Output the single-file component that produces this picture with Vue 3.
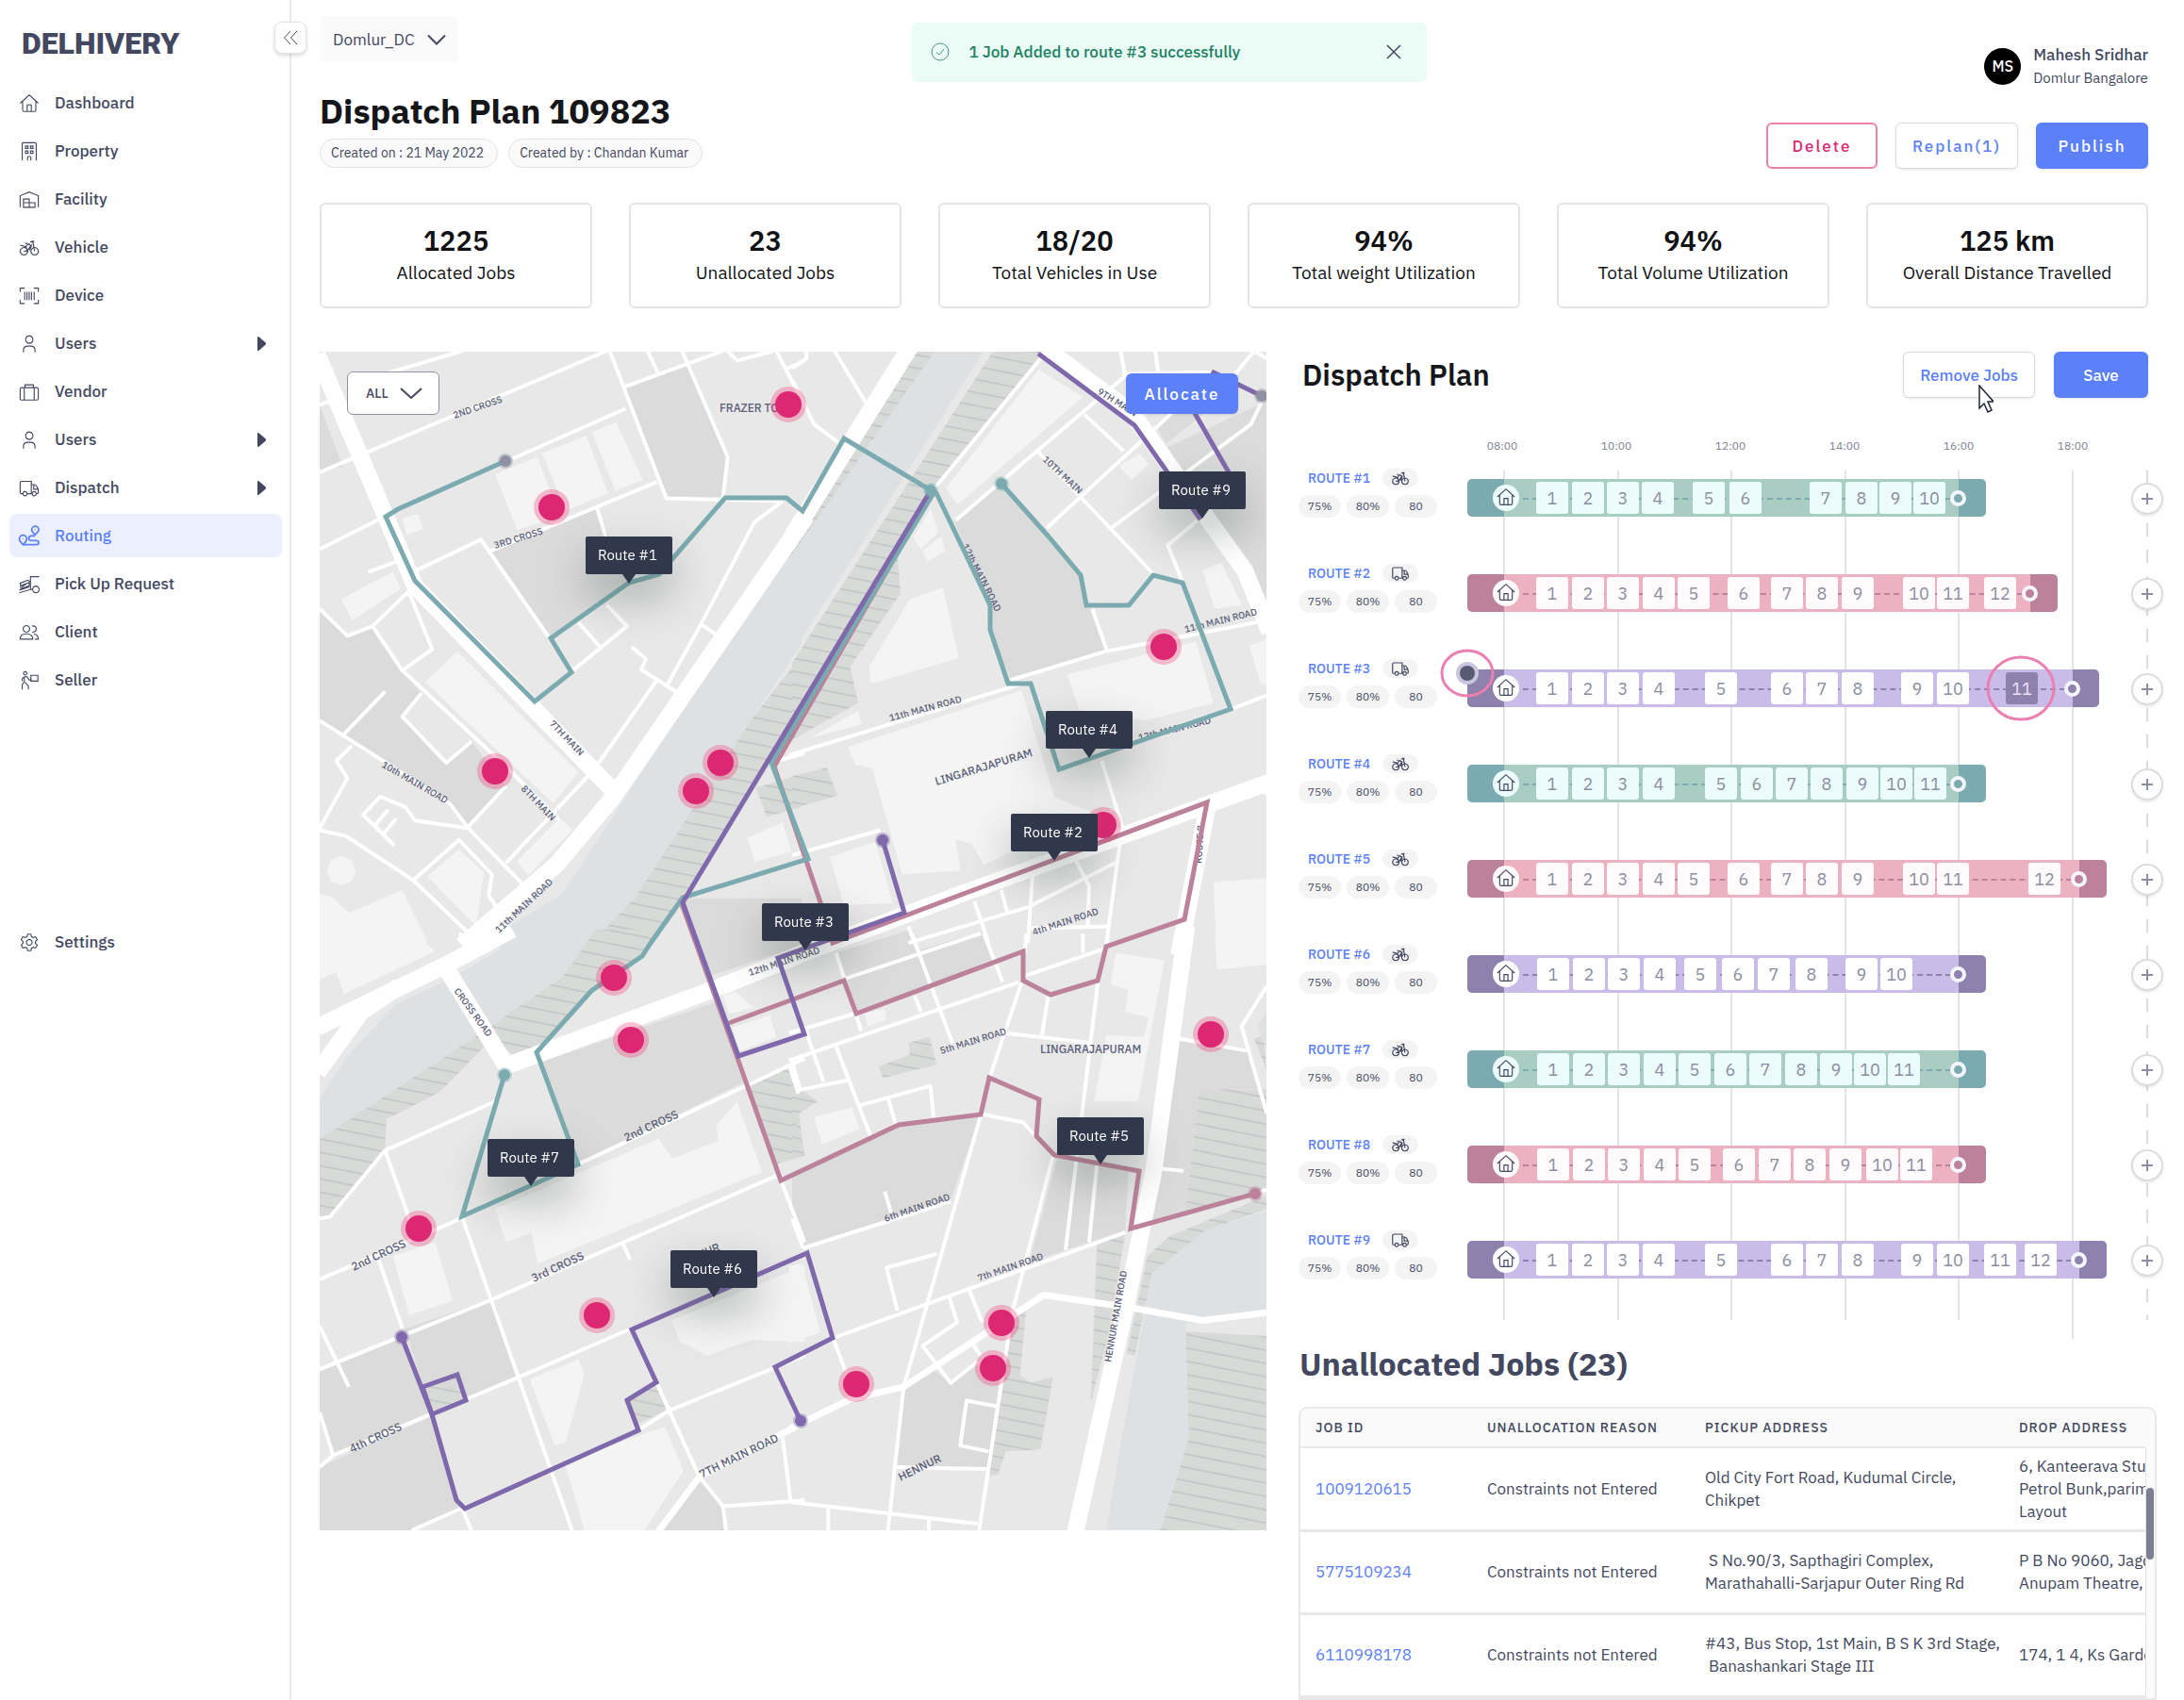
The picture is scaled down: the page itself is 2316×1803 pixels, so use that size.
<script setup>
import { ref } from 'vue'

const hub = ref('Domlur_DC')
const filter = ref('ALL')
const showToast = ref(true)

const menu = [
  { name: 'Dashboard', icon: 'home' },
  { name: 'Property', icon: 'building' },
  { name: 'Facility', icon: 'warehouse' },
  { name: 'Vehicle', icon: 'bike' },
  { name: 'Device', icon: 'barcode' },
  { name: 'Users', icon: 'user', more: true },
  { name: 'Vendor', icon: 'case' },
  { name: 'Users', icon: 'user', more: true },
  { name: 'Dispatch', icon: 'truck', more: true },
  { name: 'Routing', icon: 'route', active: true },
  { name: 'Pick Up Request', icon: 'pickup' },
  { name: 'Client', icon: 'users' },
  { name: 'Seller', icon: 'seller' },
  { name: 'Settings', icon: 'gear', last: true },
]

// stroke paths on a 24x24 grid
const icons = {
  home: 'M1 12 12 2l11 10M4 10v10q0 2 2 2h12q2 0 2-2V10M9.500 22v-8h5v8',
  building: 'M3.500 23V3q0-1.500 1.500-1.500h14q1.500 0 1.500 1.500v20M7.500 5.500h3v3h-3zM13.500 5.500h3v3h-3zM7.500 11.500h3v3h-3zM13.500 11.500h3v3h-3zM10 23v-3q0-2 2-2t2 2v3',
  warehouse: 'M1 21.500V7.500L12 3l11 4.500v14M5 21.500V11.500h7v10zM12 16h7v5.500h-7M5 16h7',
  bike: 'M5.500 12a4.500 4.500 0 1 0 .1 0zM18.500 12a4.500 4.500 0 1 0 .1 0zM5.500 16.500h4l5.500-8M9.500 16.500 8 10.500l3.500-3 3 3-2 5M1 9.500q4.500-.5 8 4M15 4.500h3M13 5l3.500.5L18.500 16.500M10 7H7',
  barcode: 'M1 7.500V3h5.500M17.500 3H23v4.500M23 17v4.500h-5.500M6.500 21.500H1V17M6.500 7.500v10M9.300 7.500v10M12 7.500v10M14.700 7.500v10M18 7.500v10',
  user: 'M12 2.500a4.500 4.500 0 1 0 .1 0zM5 22.500v-2.500q0-5 5-5h4q5 0 5 5v2.500',
  case: 'M3 7h18q2 0 2 2v11q0 2-2 2H3q-2 0-2-2V9q0-2 2-2zM6 7v15M18 7v15M7 7V3.500h10V7',
  truck: 'M4 19H2.500Q1 19 1 17.500V5.500Q1 4 2.500 4h12v15H9.500M14.500 8H18q2 0 3 2l1.500 3q.5 1 .5 2v2.500q0 1.500-2 1.500M22.500 13.500H17.500V8M6.800 16.500a2.500 2.500 0 1 0 .1 0zM18 16.500a2.500 2.500 0 1 0 .1 0zM14.500 19h1',
  route: 'M4.500 22.500q-4.500-4.500-4.500-7a4.500 4.500 0 0 1 9 0q0 2.500-4.500 7zM4.500 15v.8M19 10.500q-4-4-4-6a4 4 0 0 1 8.500 0q0 2-4.500 6zM19.200 4v.8M4.500 22.500h16q3 0 3-2.500t-3-2.500H14.500q-3 0-3-2.800t3-2.800h4.500',
  pickup: 'M0 22.500 13.500 18.500V3h10.500M13.500 18.500h3M20 14.500a4 4 0 1 0 .1 0zM1 11l8.500-3.500q2-.5 2.500 1L12 14l-10 3.500zM1.500 14l10.500-4M0 19.500l12-4M3 15.500l7-5',
  users: 'M8.500 4a4 4 0 1 0 .1 0zM1 20.500Q1 14 8.500 14t8 6.500zM15.500 4.500q5-.5 5 3.500t-5 4M17.500 14Q23 15 23 20.500h-4',
  seller: 'M7 1.500a2 2 0 1 0 .1 0zM3.500 23v-6l2.500-3V8q4-1.500 4.500 1.500L12 11.500h3M3.500 13v-3L6 8M11 23v-4l-4-4.500M14 6h8.500v7H14z',
  gear: 'M12 8.500a3.500 3.500 0 1 0 .1 0zM10 2h4l.7 3 2 1.100 3-.9 2 3.500-2.200 2.300v2l2.200 2.300-2 3.500-3-.9-2 1.100-.7 3h-4l-.7-3-2-1.100-3 .9-2-3.500 2.200-2.300v-2L2.300 8.700l2-3.500 3 .9 2-1.100z',
}

const stats = [
  { value: '1225', label: 'Allocated Jobs' },
  { value: '23', label: 'Unallocated Jobs' },
  { value: '18/20', label: 'Total Vehicles in Use' },
  { value: '94%', label: 'Total weight Utilization' },
  { value: '94%', label: 'Total Volume Utilization' },
  { value: '125 km', label: 'Overall Distance Travelled' },
]

// the city map comes in four tiles, each drawn in its own units
const tiles = [
  {
    transform: 'matrix(.3333 0 0 .4082 -9 -13)',
    dark: ['27,170 100,330 27,345', '995,130 1195,65 1325,305 1310,410 1130,410', '570,550 910,440 1010,633 760,776', '27,700 115,770 195,745 290,860 350,920 290,980 430,1100 510,1045 620,1160 495,1265 440,1210 27,990'],
    light: ['585,350 720,305 790,460 655,495', '735,295 875,250 945,400 810,445', '893,240 970,215 1055,365 968,393', '290,465 340,452 357,493 303,508', '95,675 260,603 285,648 130,730', '465,810 850,1125 770,1205 362,890', '370,1395 470,1325 550,1385 525,1525', '655,1355 790,1243 832,1273 690,1393', '27,1440 70,1450 120,1490 290,1430 370,1568 27,1568', '50,1380 64,1352 95,1341 128,1352 142,1380 128,1408 95,1419 64,1408', '1388,1295 1500,1255 1528,1330 1412,1358'],
    river: ['1560,490 1560,790 1030,1450 880,1580 520,1580 800,1440 1000,1190'],
    park: ['1570,810 1570,960 1183,1463 1080,1580 880,1580 1130,1270', '1415,1165 1560,1130 1560,1215 1450,1240'],
    roads: ['27,345 940,30', '150,110 480,30', '950,30 1130,413 1500,420', '990,125 1310,30', '1070,30 1105,90', '1180,30 1325,305 1310,413', '1325,30 1355,55 1470,30', '1480,30 1540,125 1570,170', '1515,75 1560,60', '180,605 270,578', '27,545 215,468', '27,170 60,160', '640,310 1000,180', '335,600 540,520 830,860', '570,550 1100,370', '910,440 940,520', '940,690 1005,745 711,941', '850,735 920,800', '1500,420 1410,475 1240,740 1135,895', '1240,740 1295,770', '1020,800 1065,830 1050,858 1170,920', '1100,885 915,1100', '27,700 115,770 195,745 290,860 620,1110 790,1250', '195,745 310,655 385,805 290,860', '350,920 290,980 430,1100 510,1045', '105,1025 235,915', '27,990 440,1205 500,1270 690,1430', '130,1055 80,1095 115,1140 27,1270', '500,1270 330,1250 300,1215 220,1188 165,1235 265,1315', '200,1265 245,1222', '230,1285 270,1245', '495,1270 620,1160', '620,1360 880,1135', '27,1275 110,1290 325,1405 510,1550', '325,1405 470,1300 575,1390 565,1445 610,1500', '1463,1100 1570,1075'],
    mains: ['20,40 330,640 970,1180', '1575,460 960,1190 780,1365 480,1575'],
  },
  {
    transform: 'matrix(.3333 0 0 .4082 501 -13)',
    dark: ['515,470 667,375 812,510 918,612 935,692 955,700 1000,810 695,885 631,755 630,690', '1195,280 1510,160 1510,720 1430,580 1300,430', '1155,220 1290,150 1360,160 1190,270'],
    light: ['785,78 925,150 525,430 490,385', '245,850 375,675 480,645 530,828 250,895', '385,515 440,440 465,500 410,545', '415,550 475,510 487,550 430,577', '60,1035 210,965 220,1000', '178,1058 730,912 835,1190 960,1230 610,1365 570,1310 520,1300 535,1380 350,1390 255,1115 200,1105', '875,870 1285,785 1340,945 1125,990 915,965', '1040,330 1105,295 1135,325 1080,365', '1305,600 1365,580 1432,690 1345,700', '120,1345 265,1305 320,1465 165,1470', '1340,1410 1510,1400 1510,1568 1350,1568', '1455,795 1510,780 1510,900 1490,895'],
    river: ['455,30 610,30 -10,830 -10,570'],
    park: ['390,30 460,30 -10,575 -10,520', '640,30 800,30 450,400 335,560 345,660 185,850 210,945 0,1040 0,840', '0,1135 110,1112 145,1185 0,1220'],
    roads: ['800,40 440,400', '135,30 235,165', '0,105 70,220 150,270', '0,75 45,50 45,30', '520,470 1060,95 1045,30', '1155,30 1165,85', '1050,90 1340,85', '1400,100 1470,30 1510,50', '810,490 1290,130', '780,290 1150,610', '1015,490 1460,220 1495,160', '930,195 1055,290', '1290,470 1195,535 1240,625', '695,885 1000,810 1510,730', '955,700 1000,805', '-10,1080 730,895', '1395,961 1510,925', '985,1095 1050,1265 1000,1568', '0,1340 280,1275', '580,1460 625,1568', '665,1430 685,1490', '370,1525 390,1568', '765,1390 750,1568', '900,1350 945,1420 940,1530', '1040,1355 750,1475 370,1568', '750,1530 1005,1525', '1490,1165 1510,1180'],
    mains: ['375,20 0,510', '800,20 1080,190 1220,350 1440,600 1520,760', '0,1605 540,1440 1520,1150', '1325,1200 1230,1600'],
  },
  {
    transform: 'matrix(.3333 0 0 .4146 -9 617)',
    dark: ['730,330 1290,175 1375,380 850,590', '300,1010 580,935 660,1135 492,1195 465,1130 355,1160', '27,1120 287,1033 385,1230 70,1335 27,1225', '27,1365 385,1235 461,1450 490,1472 320,1527 27,1527', '1235,1395 1310,1465 1320,1527 1110,1527', '1180,-90 1560,-90 1560,30 1265,110'],
    light: ['27,0 330,0 395,45 105,155 80,100 27,118', '585,705 1105,525 1150,575 1295,530 1290,490 1355,430 1435,610 720,845 700,765 620,790', '260,825 395,790 450,940 312,977', '695,1140 850,1090 870,1125 810,1300 775,1310', '805,1350 1125,1262 1185,1375 1060,1527 870,1527', '1145,990 1570,850 1570,1045 1400,1040 1260,1080 1175,1045', '1310,160 1350,150 1410,190 1330,205', '1340,240 1460,210 1480,265 1365,300'],
    river: ['27,420 130,300 270,180 430,120 560,60 700,-10 905,-10 800,110 530,260 27,525'],
    park: ['27,525 530,260 800,110 905,-10 1115,-10 1052,58 892,146 718,304 640,310 600,280 550,290 410,405 240,475 235,555 60,720 27,725', '1375,385 1520,340 1545,420 1570,570 1480,590', '355,1165 465,1130 492,1195 385,1230', '1006,1195 1098,1148 1130,1220 1040,1255'],
    roads: ['27,730 60,725 235,555 585,430', '235,555 330,770', '27,885 475,730', '480,725 830,1527', '215,835 290,1010', '27,1115 580,935 1480,620', '850,590 1570,320', '27,1005 120,1160', '27,1225 70,1335', '27,1365 70,1335 660,1135 1020,1010', '1040,1271 1140,1220 1570,1080', '1098,1148 1235,1390 1310,1465 1570,1450', '480,1470 510,1527', '320,1527 480,1470', '990,790 1015,835', '1310,1465 1320,1527', '1500,1290 1525,1450', '470,0 505,20', '1520,335 1550,410', '1495,632 1570,790'],
    streets: ['1100,1535 1235,1390 1570,1250'],
    mains: ['20,240 430,80 640,-10', '20,355 160,200 280,135', '430,90 625,345', '600,345 1290,140 1570,50'],
  },
  {
    transform: 'matrix(.3333 0 0 .4146 501 617)',
    dark: ['0,615 340,490 600,462 500,690 35,805 0,730', '845,570 1070,610 1060,760 755,840', '1225,275 1450,300 1510,430 1510,398 1295,398 1250,720 1140,740', '350,1165 440,1110 505,1150 580,1100 660,1140 620,1370 330,1365', '140,50 380,-10 435,140 205,200', '395,45 600,-5 640,65 445,130'],
    light: ['1030,50 1185,68 1100,430 960,430 1000,260 1120,265 1135,215 1060,200 1070,145 1013,130', '1345,0 1510,0 1510,80 1352,92', '230,205 295,193 300,220 240,238', '70,470 190,445 215,500 95,540', '-10,850 30,845 90,1020 -10,1050'],
    river: ['1510,710 1315,760 1145,870 1115,1000 1040,1330 1000,1527 1170,1527 1262,1290 1252,1000 1510,970', '1480,235 1510,205 1510,300'],
    park: ['970,790 1060,770 1000,1050 950,1200', '1130,825 1200,775 1510,670 1510,705 1315,760 1145,870 1090,1080 1065,1075', '1295,398 1510,400 1510,660 1250,720', '1252,1018 1510,1030 1510,1527 1170,1527 1262,1290', '690,1000 745,960 725,1130 760,1148 830,1135 790,1320 680,1325 655,1385 625,1385', '275,340 375,310 370,280 438,265 460,335 290,370', '0,380 80,430 5,470 40,560 0,575', '1470,270 1500,260 1510,350'],
    roads: ['355,1160 305,1527', '600,465 355,1160', '730,125 630,365', '-10,325 720,125', '735,110 990,40', '-10,255 200,205', '130,1035 1060,765', '35,805 505,685', '830,570 700,970 595,1527', '975,110 870,810', '970,590 945,790', '680,255 945,280', '815,160 795,260', '925,0 925,50', '1005,0 1000,30', '745,0 740,50', '40,240 100,380', '0,325 25,400 180,375', '140,290 250,520', '215,440 440,390 450,470', '305,420 330,490', '380,0 510,280', '610,0 670,125', '140,50 220,250', '390,160 410,200', '160,118 600,0', '295,660 315,715', '460,820 300,855 335,965', '500,930 525,995 415,1055 505,1150 590,1095', '560,905 605,995', '570,1045 600,1080', '655,1210 555,1195 535,1310 625,1325', '330,1365 620,1370', '0,1455 590,1510', '115,1470 115,1527', '435,1495 435,1527', '0,730 35,805', '130,1035 170,1120', '600,462 735,483 775,520', '1150,600 1245,607', '1225,268 1445,300', '1510,135 1430,238 1510,460', '1472,666 1510,655'],
    streets: ['-10,1268 190,1190 355,1160 640,1010 800,925 1060,955 1305,990 1510,970'],
    mains: ['1255,-20 1150,610 1060,960 900,1535'],
  },
]

const lines = [
  { color: '#7babb0', points: '197,116 83,167 70,175 101,243 228,371 267,340 245,304 328,245 360,236 430,155 495,155 512,169 556,92 648,147 654,150 711,269 711,295 730,352 754,352 784,443 966,379 915,245 884,237 858,269 813,269 807,237 772,195 723,140' },
  { color: '#bc829b', points: '649,150 482,440 533,590 544,627 941,478 917,602 834,631 825,667 775,682 746,667 746,636 569,702 556,667 434,712' },
  { color: '#bc829b', points: '384,586 443,749 489,879 614,820 701,809 710,770 763,793 760,832 779,852 869,869 860,930 992,893' },
  { color: '#7babb0', points: '651,150 479,436 518,538 385,579 351,627 342,641 288,678 230,743 274,862 151,917 196,767' },
  { color: '#8068ad', points: '597,518 620,595 486,643 514,724 444,747 385,584 648,147' },
  { color: '#8068ad', points: '87,1045 119,1127 145,1218 154,1227 338,1144 326,1112 357,1093 331,1037 517,956 544,1046 483,1077 510,1134' },
  { color: '#8068ad', points: '109,1098 146,1085 155,1112 119,1127 109,1098' },
  { color: '#8068ad', points: '762,2 864,78 934,178' },
  { color: '#8068ad', points: '964,128 925,60 948,22 999,47' },
]

const ends = [
  { x: 197, y: 116, color: '#8f90a3' },
  { x: 648, y: 147, color: '#7babb0' },
  { x: 723, y: 140, color: '#7babb0' },
  { x: 597, y: 518, color: '#8068ad' },
  { x: 196, y: 767, color: '#7babb0' },
  { x: 87, y: 1045, color: '#8068ad' },
  { x: 510, y: 1134, color: '#8068ad' },
  { x: 992, y: 893, color: '#bc829b' },
  { x: 999, y: 47, color: '#8f90a3' },
]

const pins = [
  [246, 165], [497, 56], [186, 445], [425, 436], [399, 466], [895, 313], [831, 502], [312, 664],
  [330, 730], [105, 930], [294, 1022], [945, 724], [569, 1095], [723, 1030], [714, 1078],
]

const tags = [
  { n: 1, x: 328, y: 246 },
  { n: 9, x: 936, y: 177 },
  { n: 4, x: 816, y: 431 },
  { n: 2, x: 779, y: 540 },
  { n: 3, x: 515, y: 635 },
  { n: 5, x: 828, y: 862 },
  { n: 7, x: 224, y: 885 },
  { n: 6, x: 418, y: 1003 },
]

const places = [
  { t: '2ND CROSS', x: 143, y: 71, r: -19 },
  { t: '3RD CROSS', x: 186, y: 209, r: -17 },
  { t: '7TH MAIN', x: 243, y: 395, r: 46 },
  { t: '8TH MAIN', x: 213, y: 464, r: 46 },
  { t: '10th MAIN ROAD', x: 65, y: 440, r: 30 },
  { t: '11th MAIN ROAD', x: 190, y: 617, r: -43 },
  { t: 'FRAZER TOWN', x: 424, y: 64, r: 0, big: true },
  { t: '9TH MAIN', x: 824, y: 44, r: 32 },
  { t: '10TH MAIN', x: 766, y: 115, r: 43 },
  { t: '12th MAIN ROAD', x: 681, y: 206, r: 63 },
  { t: '11th MAIN ROAD', x: 918, y: 298, r: -14 },
  { t: '11th MAIN ROAD', x: 605, y: 392, r: -15 },
  { t: '12th MAIN ROAD', x: 869, y: 413, r: -14 },
  { t: 'LINGARAJAPURAM', x: 654, y: 460, r: -17, big: true },
  { t: '4th MAIN ROAD', x: 757, y: 619, r: -18 },
  { t: 'ROUTE 7', x: 935, y: 543, r: -86 },
  { t: '12th MAIN ROAD', x: 456, y: 662, r: -18 },
  { t: 'CROSS ROAD', x: 142, y: 678, r: 54 },
  { t: '2nd CROSS', x: 325, y: 838, r: -25, big: true },
  { t: '2nd CROSS', x: 36, y: 975, r: -25, big: true },
  { t: '3rd CROSS', x: 227, y: 987, r: -25, big: true },
  { t: '4th CROSS', x: 34, y: 1168, r: -25, big: true },
  { t: '7TH MAIN ROAD', x: 405, y: 1195, r: -26, big: true },
  { t: 'HENNUR', x: 616, y: 1198, r: -26, big: true },
  { t: 'HENNUR', x: 380, y: 971, r: -22, big: true },
  { t: '5th MAIN ROAD', x: 659, y: 745, r: -17 },
  { t: 'LINGARAJAPURAM', x: 764, y: 744, r: 0, big: true },
  { t: '6th MAIN ROAD', x: 600, y: 923, r: -19 },
  { t: '7th MAIN ROAD', x: 699, y: 986, r: -19 },
  { t: 'HENNUR MAIN ROAD', x: 839, y: 1072, r: -80 },
]

const hours = ['08:00', '10:00', '12:00', '14:00', '16:00', '18:00']

const routes = [
  { n: 1, tone: 'teal', icon: 'bike', end: 521, size: 550, stops: [73, 111, 148, 185, 239, 278, 363, 401, 437, 473] },
  { n: 2, tone: 'pink', icon: 'truck', end: 597, size: 626, stops: [73, 111, 148, 186, 223, 276, 322, 359, 397, 462, 498, 548] },
  { n: 3, tone: 'purple', icon: 'truck', end: 642, size: 670, picked: 11, stops: [73, 111, 148, 186, 252, 322, 359, 397, 460, 498, 571] },
  { n: 4, tone: 'teal', icon: 'bike', end: 521, size: 550, stops: [73, 111, 148, 186, 252, 290, 327, 364, 402, 438, 474] },
  { n: 5, tone: 'pink', icon: 'bike', end: 649, size: 678, stops: [73, 111, 148, 186, 223, 276, 322, 359, 397, 462, 498, 595] },
  { n: 6, tone: 'purple', icon: 'bike', end: 521, size: 550, stops: [74, 112, 149, 187, 230, 270, 308, 348, 401, 438] },
  { n: 7, tone: 'teal', icon: 'bike', end: 521, size: 550, stops: [74, 112, 149, 187, 224, 262, 299, 337, 374, 410, 446] },
  { n: 8, tone: 'pink', icon: 'bike', end: 521, size: 550, stops: [74, 112, 149, 187, 224, 271, 309, 346, 384, 423, 459] },
  { n: 9, tone: 'purple', icon: 'truck', end: 649, size: 678, stops: [73, 111, 148, 186, 252, 322, 359, 397, 460, 498, 548, 591] },
]

// timeline units to a share of the track
const pct = (n) => (n / 722) * 100 + '%'

const jobs = [
  { id: '1009120615', pickup: ['Old City Fort Road, Kudumal Circle,', 'Chikpet'], drop: ['6, Kanteerava Studio,', 'Petrol Bunk,parimala', 'Layout'] },
  { id: '5775109234', pickup: ['\u00a0S No.90/3, Sapthagiri Complex,', 'Marathahalli-Sarjapur Outer Ring Rd'], drop: ['P B No 9060, Jagdish', 'Anupam Theatre,'] },
  { id: '6110998178', pickup: ['#43, Bus Stop, 1st Main, B S K 3rd Stage,', '\u00a0Banashankari Stage III'], drop: ['174, 1 4, Ks Garden'] },
]
</script>

<template>
  <div class="app">
    <aside class="sidebar">
      <div class="logo">DELHIVERY</div>
      <button class="collapse" aria-label="Collapse menu">
        <svg viewBox="0 0 16 16"><path d="M8 1 1.500 8 8 15M15 1 8.500 8 15 15" /></svg>
      </button>
      <nav>
        <a v-for="(item, i) in menu" :key="i" href="#" class="item" :class="{ active: item.active, last: item.last }">
          <svg class="icon" viewBox="0 0 24 24"><path :d="icons[item.icon]" /></svg>
          <span>{{ item.name }}</span>
          <svg v-if="item.more" class="arrow" viewBox="0 0 9 15"><path d="M0 1q0-1.500 1.500-.7l7 6q1 1.200 0 2.400l-7 6Q0 15.500 0 14z" /></svg>
        </a>
      </nav>
    </aside>

    <main>
      <header class="topbar">
        <label class="hub">
          <select v-model="hub" aria-label="Hub">
            <option>Domlur_DC</option>
          </select>
          <svg viewBox="0 0 20 12"><path d="M1 1.500 10 10.500 19 1.500" /></svg>
        </label>
        <div v-if="showToast" class="toast">
          <svg class="tick" viewBox="0 0 20 20"><circle cx="10" cy="10" r="9" /><path d="M6 10.500 9 13l5-6" /></svg>
          <span>1 Job Added to route #3 successfully</span>
          <button aria-label="Dismiss" @click="showToast = false">
            <svg viewBox="0 0 16 16"><path d="M1 1 15 15M15 1 1 15" /></svg>
          </button>
        </div>
        <div class="user">
          <div class="avatar">MS</div>
          <div>
            <div class="user-name">Mahesh Sridhar</div>
            <div class="user-hub">Domlur Bangalore</div>
          </div>
        </div>
      </header>

      <div class="title-row">
        <div>
          <h1>Dispatch Plan 109823</h1>
          <div class="chips">
            <span>Created on : 21 May 2022</span>
            <span>Created by : Chandan Kumar</span>
          </div>
        </div>
        <div class="actions">
          <button class="btn danger">Delete</button>
          <button class="btn">Replan(1)</button>
          <button class="btn primary">Publish</button>
        </div>
      </div>

      <section class="stats">
        <div v-for="s in stats" :key="s.label" class="stat">
          <strong>{{ s.value }}</strong>
          <span>{{ s.label }}</span>
        </div>
      </section>

      <div class="content">
        <section class="map">
          <svg viewBox="0 0 1004 1250" class="canvas">
            <defs>
              <pattern id="hatch" width="60" height="34" patternUnits="userSpaceOnUse" patternTransform="skewY(9)">
                <rect width="60" height="34" fill="#d7dad7" />
                <rect y="10" width="60" height="3" fill="#bcbfc0" />
              </pattern>
            </defs>
            <rect width="1004" height="1250" fill="#e8e8e8" />
            <g v-for="(tile, i) in tiles" :key="i" :transform="tile.transform">
              <polygon v-for="p in tile.dark" :key="p" class="dark" :points="p" />
              <polygon v-for="p in tile.light" :key="p" class="light" :points="p" />
              <polygon v-for="p in tile.park" :key="p" fill="url(#hatch)" :points="p" />
              <polygon v-for="p in tile.river" :key="p" class="river" :points="p" />
            </g>
            <g v-for="(tile, i) in tiles" :key="'r' + i" :transform="tile.transform">
              <polyline v-for="p in tile.roads" :key="p" class="road" :points="p" />
              <polyline v-for="p in tile.streets" :key="p" class="road street" :points="p" />
              <polyline v-for="p in tile.mains" :key="p" class="road main-road" :points="p" />
            </g>
            <text
              v-for="(p, i) in places" :key="'p' + i" class="place" :class="{ big: p.big }"
              :transform="`translate(${p.x} ${p.y}) rotate(${p.r})`"
            >{{ p.t }}</text>
            <polyline v-for="l in lines" :key="l.points" class="line" :points="l.points" :stroke="l.color" />
            <g v-for="e in ends" :key="e.x" :fill="e.color">
              <circle :cx="e.x" :cy="e.y" r="8" opacity=".4" />
              <circle :cx="e.x" :cy="e.y" r="6" />
            </g>
            <g v-for="p in pins" :key="p[0]" class="pin">
              <circle :cx="p[0]" :cy="p[1]" r="19" opacity=".3" />
              <circle :cx="p[0]" :cy="p[1]" r="14" />
            </g>
            <g v-for="t in tags" :key="t.n" class="tag" :transform="`translate(${t.x} ${t.y})`">
              <path d="M-44-50H44q2 0 2 2v36q0 2-2 2H7L0 0l-7-10h-37q-2 0-2-2v-36q0-2 2-2z" />
              <text x="-33" y="-25">Route #{{ t.n }}</text>
            </g>
          </svg>
          <label class="filter">
            <select v-model="filter" aria-label="Filter">
              <option>ALL</option>
            </select>
            <svg viewBox="0 0 24 12"><path d="M1 1 12 11 23 1" /></svg>
          </label>
          <button class="btn primary allocate">Allocate</button>
        </section>

        <section class="plan">
          <div class="plan-head">
            <h2>Dispatch Plan</h2>
            <button class="btn remove">
              Remove Jobs
              <svg class="cursor" viewBox="0 0 16 30"><path d="M1 1v24l5-5 4 9 4-2-4-9h6z" /></svg>
            </button>
            <button class="btn primary save">Save</button>
          </div>

          <div class="chart">
            <div class="hours">
              <span v-for="(h, i) in hours" :key="h" :style="{ left: pct(37 + i * 121) }">{{ h }}</span>
            </div>
            <div class="rows">
              <div class="grid">
                <i v-for="(h, i) in hours" :key="h" :style="{ left: pct(38 + i * 120.6) }"></i>
                <svg class="rail"><line x1="1" y1="0" x2="1" y2="100%" /></svg>
              </div>
              <div v-for="r in routes" :key="r.n" class="row" :class="r.tone">
                <div class="info">
                  <div class="name">
                    <a href="#">ROUTE #{{ r.n }}</a>
                    <span class="vehicle"><svg viewBox="0 0 24 24"><path :d="icons[r.icon]" /></svg></span>
                  </div>
                  <div class="loads"><span>75%</span><span>80%</span><span>80</span></div>
                </div>
                <div class="track">
                  <div class="bar" :style="{ width: pct(r.size) }"></div>
                  <div class="work" :style="{ left: pct(39), width: pct(r.end - 39) }"></div>
                  <div class="dash" :style="{ left: pct(59), width: pct(r.end - 67) }"></div>
                  <span class="depot" :style="{ left: pct(41) }">
                    <svg viewBox="0 0 24 24"><path :d="icons.home" /></svg>
                  </span>
                  <span
                    v-for="(x, i) in r.stops" :key="x" class="stop" :class="{ picked: r.picked === i + 1 }"
                    :style="{ left: pct(x) }"
                  >{{ i + 1 }}</span>
                  <span class="ring" :style="{ left: pct(r.end) }"></span>
                  <template v-if="r.picked">
                    <svg class="halo small" viewBox="0 0 58 52">
                      <ellipse cx="29" cy="26" rx="27" ry="24" /><circle class="rim" cx="29" cy="26" r="12" /><circle class="dot" cx="29" cy="26" r="8" />
                    </svg>
                    <svg class="halo large" viewBox="0 0 74 70" :style="{ left: pct(587) }"><ellipse cx="37" cy="35" rx="35" ry="33" /></svg>
                  </template>
                  <button class="add" :aria-label="'Add job to route ' + r.n">
                    <svg viewBox="0 0 12 12"><path d="M6 0v12M0 6h12" /></svg>
                  </button>
                </div>
              </div>
            </div>
          </div>

          <h2 class="jobs-title">Unallocated Jobs (23)</h2>
          <div class="jobs">
            <div class="table-wrap">
              <table>
                <thead>
                  <tr>
                    <th>JOB ID</th>
                    <th>UNALLOCATION REASON</th>
                    <th>PICKUP ADDRESS</th>
                    <th>DROP ADDRESS</th>
                  </tr>
                </thead>
                <tbody>
                  <tr v-for="job in jobs" :key="job.id">
                    <td><a href="#">{{ job.id }}</a></td>
                    <td>Constraints not Entered</td>
                    <td><div v-for="line in job.pickup" :key="line">{{ line }}</div></td>
                    <td><div v-for="line in job.drop" :key="line">{{ line }}</div></td>
                  </tr>
                </tbody>
              </table>
            </div>
            <div class="scroll"><i></i></div>
          </div>
        </section>
      </div>
    </main>
  </div>
</template>

<style>
  body {
    margin: 0;
    overflow: hidden;
  }
</style>

<style scoped>
  * {
    box-sizing: border-box;
  }

  .app {
    display: flex;
    height: 100vh;
    overflow: hidden;
    background: white;
    color: #434860;
    font-family: "IBM Plex Sans", Roboto, "Noto Sans", sans-serif;
    font-size: 17px;
  }

  a {
    color: #5b80f7;
    text-decoration: none;
  }

  svg {
    fill: none;
    stroke: currentColor;
  }

  button, select {
    font: inherit;
    color: inherit;
  }

  h1, h2 {
    margin: 0;
    color: #15161a;
  }

  /* sidebar */
  .sidebar {
    position: relative;
    flex: 0 0 309px;
    border-right: 2px solid #ebebeb;
    padding: 26px 8px 0 10px;
  }

  .logo {
    height: 40px;
    line-height: 40px;
    padding-left: 13px;
    font-size: 32px;
    font-weight: 900;
    font-family: Roboto, sans-serif;
  }

  .collapse {
    position: absolute;
    top: 23px;
    right: -18px;
    width: 34px;
    height: 34px;
    padding: 8px;
    border: 1px solid #e3e3e6;
    border-radius: 8px;
    background: white;
    box-shadow: 0 2px 4px rgba(0, 0, 0, 0.15);
    z-index: 2;
  }

  .collapse svg {
    display: block;
  }

  nav {
    display: flex;
    flex-direction: column;
    gap: 5px;
    margin-top: 20px;
  }

  .item {
    display: flex;
    align-items: center;
    height: 46px;
    padding: 0 17px 0 9px;
    border-radius: 8px;
    color: #434860;
    font-size: 17px;
    font-weight: 500;
  }

  .item.active {
    background: #ecf0fe;
    color: #5b80f7;
  }

  .item.last {
    margin-top: 227px;
  }

  .icon {
    width: 24px;
    height: 21px;
    margin-right: 15px;
    stroke-width: 1.3;
    overflow: visible;
  }

  .item.active .icon {
    stroke-width: 2;
  }

  .arrow {
    width: 9px;
    height: 15px;
    margin-left: auto;
    fill: #434860;
    stroke: none;
  }

  /* page head */
  main {
    flex: 1;
    min-width: 0;
    padding: 17px 38px 0 30px;
    position: relative;
  }

  .topbar {
    display: flex;
    justify-content: space-between;
    align-items: flex-start;
    height: 79px;
  }

  .hub {
    display: flex;
    align-items: center;
    gap: 13px;
    height: 49px;
    padding: 0 13px 0 14px;
    border-radius: 6px;
    background: #fafafa;
    font-size: 17px;
  }

  select {
    appearance: none;
    border: none;
    background: none;
    padding: 0;
  }

  .hub svg {
    width: 20px;
    stroke-width: 2;
  }

  .toast {
    position: absolute;
    top: 24px;
    left: calc(50% - 346px);
    width: 546px;
    height: 63px;
    display: flex;
    align-items: center;
    padding: 0 27px 2px 20px;
    border-radius: 6px;
    background: #eafcf5;
    color: #1b7f63;
    font-size: 17px;
    font-weight: 500;
  }

  .tick {
    width: 20px;
    margin-right: 21px;
    opacity: 0.8;
  }

  .toast button {
    margin-left: auto;
    padding: 0;
    width: 16px;
    height: 16px;
    border: none;
    background: none;
    color: #434860;
  }

  .toast button svg {
    display: block;
    stroke-width: 1.5;
  }

  .user {
    display: flex;
    align-items: center;
    gap: 13px;
    margin-top: 28px;
  }

  .avatar {
    width: 39px;
    height: 39px;
    border-radius: 50%;
    background: black;
    color: white;
    font-size: 16px;
    font-weight: 500;
    line-height: 39px;
    text-align: center;
  }

  .user-name {
    font-weight: 500;
    line-height: 26px;
  }

  .user-hub {
    font-size: 15px;
    line-height: 24px;
  }

  .title-row {
    display: flex;
    justify-content: space-between;
    align-items: flex-end;
  }

  h1 {
    font-size: 36px;
    line-height: 44px;
    font-weight: 700;
  }

  .chips {
    display: flex;
    gap: 11px;
    margin: 7px 0 1px;
  }

  .chips span {
    height: 31px;
    padding: 0 14px 0 11px;
    border: 1px solid #e2e2e6;
    border-radius: 16px;
    background: #fafafa;
    font-size: 14px;
    line-height: 29px;
  }

  .actions {
    display: flex;
    gap: 19px;
  }

  .btn {
    height: 49px;
    padding: 0 17px;
    border: 1px solid #dcdce0;
    border-radius: 6px;
    background: white;
    color: #5b80f7;
    font-size: 17px;
    font-weight: 500;
    letter-spacing: 2px;
    box-shadow: 0 1px 3px rgba(0, 0, 0, 0.1);
  }

  .danger {
    width: 118px;
    border: 2px solid #ee7fa9;
    color: #dc2772;
    box-shadow: none;
  }

  .primary {
    width: 119px;
    border: none;
    background: #5b80f7;
    color: white;
  }

  .stats {
    display: grid;
    grid-template-columns: repeat(5, 289fr) 299fr;
    gap: 39px;
    margin-top: 36px;
  }

  .stat {
    display: flex;
    flex-direction: column;
    align-items: center;
    height: 112px;
    padding-top: 22px;
    border: 2px solid #e4e4e7;
    border-radius: 6px;
    color: #101114;
  }

  .stat strong {
    font-size: 29px;
    line-height: 32px;
    font-weight: 600;
  }

  .stat span {
    font-size: 19px;
    line-height: 36px;
  }

  .content {
    display: grid;
    grid-template-columns: minmax(0, 1004fr) minmax(0, 901fr);
    gap: 34px;
    align-items: start;
    margin-top: 46px;
  }

  /* map */
  .map {
    position: relative;
  }

  .canvas {
    display: block;
    width: 100%;
    stroke: none;
  }

  .dark {
    fill: #dbdbdb;
  }

  .light {
    fill: #f4f4f4;
  }

  .river {
    fill: #dee1e3;
  }

  .road {
    fill: none;
    stroke: white;
    stroke-width: 4;
    stroke-linejoin: round;
    vector-effect: non-scaling-stroke;
  }

  .street {
    stroke-width: 7;
  }

  .main-road {
    stroke-width: 18;
  }

  .place {
    fill: #5b6079;
    font-size: 10px;
    font-weight: 500;
  }

  .place.big {
    font-size: 12px;
  }

  .line {
    fill: none;
    stroke-width: 5;
  }

  .pin {
    fill: #dc2772;
  }

  .pin circle:first-child {
    fill: #f4306f;
  }

  .tag {
    fill: #32384c;
    filter: drop-shadow(0 22px 24px rgba(70, 85, 75, 0.4));
  }

  .tag text {
    fill: white;
    font-size: 15px;
  }

  .filter {
    position: absolute;
    top: 21px;
    left: 29px;
    display: flex;
    align-items: center;
    gap: 12px;
    height: 46px;
    padding: 0 17px 0 19px;
    border: 1px solid #8f90a3;
    border-radius: 6px;
    background: white;
    font-size: 14px;
    font-weight: 500;
  }

  .filter svg {
    width: 24px;
    stroke-width: 2;
  }

  .allocate {
    position: absolute;
    top: 23px;
    right: 30px;
    height: 43px;
  }

  /* dispatch plan */
  .plan-head {
    display: flex;
    align-items: center;
  }

  .plan-head h2 {
    flex: 1;
    padding-left: 4px;
    font-size: 31px;
    font-weight: 600;
  }

  .remove, .save {
    position: relative;
    letter-spacing: 0;
    padding: 0 17px;
  }

  .save {
    width: 100px;
    margin-left: 20px;
  }

  .cursor {
    position: absolute;
    top: 34px;
    left: 79px;
    width: 16px;
    height: 30px;
    fill: white;
    stroke: #22263a;
    stroke-width: 1.5;
    z-index: 1;
  }

  .hours {
    position: relative;
    height: 20px;
    margin: 41px 0 14px 179px;
    font-size: 12px;
    line-height: 20px;
    color: #7b7f91;
  }

  .hours span {
    position: absolute;
    transform: translateX(-50%);
  }

  .rows {
    position: relative;
  }

  .grid {
    position: absolute;
    inset: 2px 0 6px 179px;
  }

  .grid i {
    position: absolute;
    top: 0;
    bottom: 0;
    width: 2px;
    background: #e4e4e6;
  }

  .grid i:last-of-type {
    bottom: -20px;
  }

  .rail {
    position: absolute;
    top: 0;
    left: 100%;
    width: 2px;
    height: 100%;
    margin-left: -2px;
    stroke: #dcdce0;
    stroke-width: 2;
    stroke-dasharray: 14 14;
  }

  .row {
    display: grid;
    grid-template-columns: 179px 1fr;
    height: 101px;
  }

  .name {
    display: flex;
    align-items: center;
    justify-content: space-between;
    width: 127px;
    height: 20px;
    padding-left: 10px;
    font-size: 14px;
    font-weight: 500;
  }

  .vehicle {
    width: 38px;
    height: 20px;
    border-radius: 10px;
    background: #f4f4f5;
  }

  .vehicle svg {
    display: block;
    width: 18px;
    height: 18px;
    margin: 1px auto;
    stroke-width: 1.6;
  }

  .loads {
    display: flex;
    gap: 6px;
    margin-top: 8px;
  }

  .loads span {
    width: 45px;
    height: 24px;
    border-radius: 12px;
    background: #f4f4f5;
    font-size: 12px;
    line-height: 24px;
    text-align: center;
  }

  .track {
    position: relative;
    height: 40px;
    margin-top: 11px;
    color: #8a8ea0;
  }

  .teal {
    --edge: #7babb0;
    --fill: #a9cdc3;
    --stop: #ecfbfc;
  }

  .pink {
    --edge: #bc829b;
    --fill: #ecb2c2;
    --stop: #fffafc;
  }

  .purple {
    --edge: #8f81ad;
    --fill: #c9bce8;
    --stop: #ffffff;
  }

  .bar, .work, .dash, .depot, .stop, .ring, .halo, .add {
    position: absolute;
  }

  .bar {
    height: 40px;
    border-radius: 5px;
    background: var(--edge);
  }

  .work {
    height: 40px;
    background: var(--fill);
  }

  .dash {
    top: 20px;
    border-top: 2px dashed var(--edge);
  }

  .depot {
    top: 6px;
    width: 28px;
    height: 28px;
    margin-left: -14px;
    border-radius: 50%;
    background: var(--stop);
    color: #434860;
  }

  .depot svg {
    display: block;
    width: 20px;
    margin: 3px 4px;
    stroke-width: 1.4;
  }

  .stop {
    top: 3px;
    width: 34px;
    height: 34px;
    border-radius: 3px;
    background: var(--stop);
    font-size: 18px;
    line-height: 35px;
    text-align: center;
  }

  .stop.picked {
    background: #8f81ad;
    color: #e9e4f6;
  }

  .ring {
    top: 12px;
    width: 17px;
    height: 17px;
    margin-left: -9px;
    border: 4px solid #f3f6ff;
    border-radius: 50%;
    background: var(--edge);
  }

  .halo {
    stroke: #ea7fb1;
    stroke-width: 3;
  }

  .halo.small {
    top: -22px;
    left: -29px;
    width: 58px;
    height: 52px;
  }

  .halo.large {
    top: -15px;
    width: 74px;
    height: 70px;
    margin-left: -37px;
  }

  .rim {
    fill: #c9c5dc;
    stroke: none;
  }

  .dot {
    fill: #565b73;
    stroke: none;
  }

  .add {
    top: 4px;
    left: 100%;
    width: 34px;
    height: 34px;
    margin-left: -18px;
    padding: 9px;
    border: 2px solid #dcdce0;
    border-radius: 50%;
    background: white;
    box-shadow: 0 2px 3px rgba(0, 0, 0, 0.08);
  }

  .add svg {
    display: block;
    width: 12px;
    height: 12px;
    stroke-width: 2;
  }

  /* unallocated jobs */
  .jobs-title {
    margin: 19px 0 25px 1px;
    font-size: 34px;
    line-height: 42px;
    font-weight: 700;
    color: #434860;
  }

  .jobs {
    position: relative;
    margin-right: -9px;
    border: 2px solid #e8e8ea;
    border-radius: 10px 10px 0 0;
    background: linear-gradient(#fafafa 40px, white 40px);
    overflow: hidden;
  }

  .table-wrap {
    margin-right: 10px;
    overflow: hidden;
  }

  table {
    width: 1000px;
    table-layout: fixed;
    border-collapse: collapse;
    font-size: 17px;
    line-height: 24px;
    white-space: nowrap;
  }

  th {
    height: 41px;
    padding: 0 0 0 16px;
    background: #fafafa;
    border-bottom: 2px solid #e8e8ea;
    font-size: 14px;
    font-weight: 500;
    letter-spacing: 1px;
    text-align: left;
  }

  th:nth-child(1) {
    width: 182px;
  }

  th:nth-child(2) {
    width: 231px;
  }

  th:nth-child(3) {
    width: 333px;
  }

  td {
    height: 88px;
    padding: 0 0 0 16px;
    border-bottom: 3px solid #e8e8ea;
  }

  .scroll {
    position: absolute;
    top: 41px;
    right: 0;
    bottom: 0;
    width: 10px;
    background: #fafafa;
    border-left: 1px solid #e2e2e6;
  }

  .scroll i {
    display: block;
    width: 8px;
    height: 76px;
    margin-top: 43px;
    border-radius: 4px;
    background: #7b7f91;
  }
</style>
